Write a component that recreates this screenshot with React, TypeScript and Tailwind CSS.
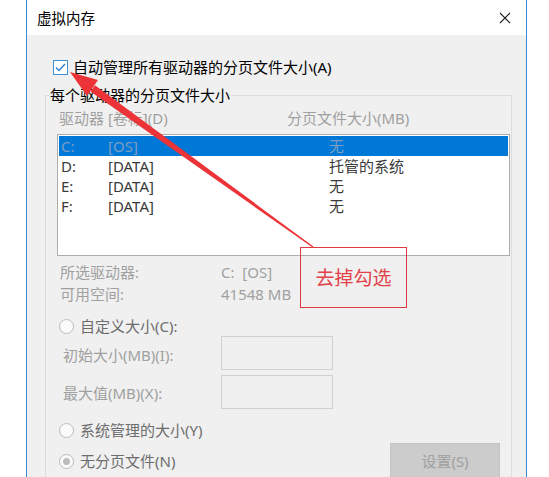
import React from 'react';

const font = { fontFamily: '"Noto Sans", "Noto Sans CJK SC", sans-serif' };

function Radio({ dot }: { dot?: boolean }) {
  return (
    <span className="w-[15px] h-[15px] rounded-full border border-[#bcbcbc] bg-[#fafafa] flex items-center justify-center shrink-0">
      {dot && <span className="w-[7px] h-[7px] rounded-full bg-[#bdbdbd]" />}
    </span>
  );
}

const drives = [
  { d: 'C:', label: '[OS]', size: '无' },
  { d: 'D:', label: '[DATA]', size: '托管的系统' },
  { d: 'E:', label: '[DATA]', size: '无' },
  { d: 'F:', label: '[DATA]', size: '无' },
];

export default function App() {
  return (
    <div className="relative w-[549px] h-[477px] overflow-hidden bg-white text-[15px] leading-[20px]" style={font}>
      <div className="ml-[26px] w-[501px] h-full border-x border-[#3b8bd4] flex flex-col">
        {/* title bar */}
        <div className="h-[35px] bg-white flex items-center pl-[10px] pr-[15px] shrink-0">
          <span className="text-black text-[14.5px]">虚拟内存</span>
          <svg className="ml-auto" width="12" height="12" viewBox="0 0 12 12">
            <path d="M1 1L11 11M11 1L1 11" stroke="#222" strokeWidth="1.1" />
          </svg>
        </div>

        <div className="flex-1 bg-[#f0f0f0] flex flex-col">
          <div className="mt-[22px] ml-[26px] flex items-center h-[20px] gap-[5px]">
            <span className="w-[15px] h-[15px] border border-[#3c8fd8] bg-white flex items-center justify-center">
              <svg width="11" height="9" viewBox="0 0 11 9">
                <path d="M1 4.5L4 7.5L10 1" fill="none" stroke="#2f7fd0" strokeWidth="1.4" />
              </svg>
            </span>
            <span className="text-black">自动管理所有驱动器的分页文件大小(A)</span>
          </div>

          <div className="relative mt-[18px] ml-[18px] w-[467px] h-[400px] border-x border-t border-[#dcdcdc]">
            <span className="absolute -top-[11px] left-[3px] px-[1px] bg-[#f0f0f0] text-black">每个驱动器的分页文件大小</span>

            <div className="pt-[12px] pl-[13px] flex h-[32px] items-end text-[#a0a0a0]">
              <span className="w-[228px]">驱动器 [卷标](D)</span>
              <span>分页文件大小(MB)</span>
            </div>

            <div className="mt-[6px] ml-[11px] w-[453px] h-[122px] border border-[#adadad] bg-white pt-[1px] px-[1px]">
              {drives.map((r, i) => (
                <div
                  key={r.d}
                  className={
                    i === 0
                      ? 'flex h-[20px] items-center pl-[2px] bg-[#0078d7] text-[#7f9dc2]'
                      : 'flex h-[20px] items-center pl-[2px] text-[#3a3a3a]'
                  }
                >
                  <span className="w-[47px]">{r.d}</span>
                  <span className="w-[221px]">{r.label}</span>
                  <span>{r.size}</span>
                </div>
              ))}
            </div>

            <div className="mt-[6px] pl-[14px] text-[#a0a0a0] flex flex-col gap-[2px]">
              <div className="flex h-[20px] items-center">
                <span className="w-[161px]">所选驱动器:</span>
                <span>C:&nbsp;&nbsp;[OS]</span>
              </div>
              <div className="flex h-[20px] items-center">
                <span className="w-[161px]">可用空间:</span>
                <span>41548 MB</span>
              </div>
            </div>

            <div className="mt-[12px] ml-[13px] flex h-[20px] items-center gap-[6px] text-[#6d6d6d]">
              <Radio />
              <span>自定义大小(C):</span>
            </div>

            <div className="ml-[17px] flex h-[34px] items-center text-[#a0a0a0]">
              <span className="w-[158px] pt-[4px]">初始大小(MB)(I):</span>
              <span className="w-[112px] h-[34px] border border-[#d0d0d0] bg-[#f0f0f0]" />
            </div>
            <div className="mt-[5px] ml-[17px] flex h-[34px] items-center text-[#a0a0a0]">
              <span className="w-[158px] pt-[2px]">最大值(MB)(X):</span>
              <span className="w-[112px] h-[34px] border border-[#d0d0d0] bg-[#f0f0f0]" />
            </div>

            <div className="mt-[11px] ml-[13px] flex h-[20px] items-center gap-[6px] text-[#6d6d6d]">
              <Radio />
              <span>系统管理的大小(Y)</span>
            </div>

            <div className="mt-[3px] ml-[13px] mr-[11px] flex h-[35px] items-center">
              <div className="flex items-center gap-[6px] text-[#6d6d6d] pt-[1px]">
                <Radio dot />
                <span>无分页文件(N)</span>
              </div>
              <span className="ml-auto w-[110px] h-[35px] bg-[#cccccc] border border-[#c4c4c4] flex items-center justify-center text-[#a0a0a0]">
                设置(S)
              </span>
            </div>
          </div>
        </div>
      </div>

      {/* annotation */}
      <div className="absolute left-[300px] top-[247px] w-[107px] h-[61px] border border-[#dc3a40] flex items-center justify-center">
        <span className="text-[19px] leading-[24px] text-[#e3424a]">去掉勾选</span>
      </div>
      <svg className="absolute left-0 top-0 pointer-events-none" width="549" height="477" viewBox="0 0 549 477">
        <polygon points="90.4,91.6 95,85.2 313.4,246.5 312.6,247.5" fill="#ec3438" />
        <polygon points="70,72 98,80 87,96" fill="#ec3438" />
      </svg>
    </div>
  );
}
